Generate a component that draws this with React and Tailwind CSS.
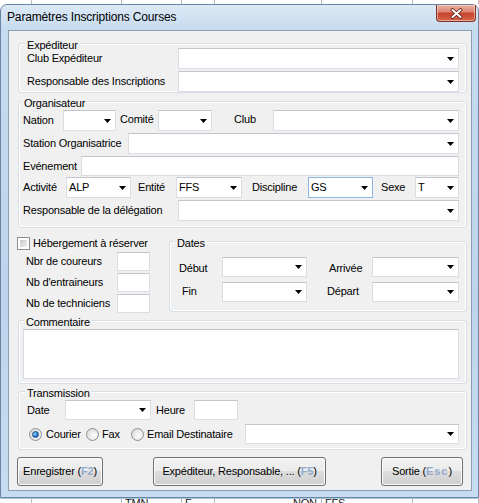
import React from 'react';

function Arrow() {
  return (
    <svg width="7" height="4" viewBox="0 0 7 4" className="shrink-0">
      <path d="M0 0H7L3.5 4Z" fill="#000" />
    </svg>
  );
}

function Combo({ className = '', value = '', focus = false }) {
  return (
    <div
      className={`h-full ${className} flex items-center justify-between bg-white border ${
        focus ? 'border-[#8cb7e4]' : 'border-[#dadde3] border-t-[#c2c5cb]'
      } pl-[2px] pr-[4px]`}
    >
      <span>{value}</span>
      <Arrow />
    </div>
  );
}

function TextBox({ className = '' }) {
  return <div className={`h-full ${className} bg-white border border-[#dadde3] border-t-[#c2c5cb]`} />;
}

function Group({ title, labelPl, className = '', bodyClass = '', children }) {
  return (
    <div className={`border border-[#d5dfe5] rounded-[3px] shadow-[inset_0_0_0_1px_#ffffff] ${className}`}>
      <div className={`h-0 ${labelPl}`}>
        <span className="inline-block -translate-y-[7px] bg-[#f0f0f0] px-[2px] leading-[13px]">{title}</span>
      </div>
      <div className={bodyClass}>{children}</div>
    </div>
  );
}

function Radio({ checked }) {
  return (
    <div className="w-[13px] h-[13px] shrink-0 rounded-full border border-[#8e8f8f] bg-[radial-gradient(circle_at_60%_60%,#fdfdfd,#d2d2d2)] flex items-center justify-center">
      {checked && (
        <div className="w-[7px] h-[7px] rounded-full border border-[#1a4e86] bg-[radial-gradient(circle_at_35%_35%,#9ad6ff,#2a7fd0_55%,#0c4d92)]" />
      )}
    </div>
  );
}

function Button({ className = '', children }) {
  return (
    <div
      className={`h-full ${className} rounded-[3px] border border-[#707070] shadow-[inset_0_0_0_1px_#fbfbfb] bg-[linear-gradient(180deg,#f3f3f3_0%,#ebebeb_48%,#dddddd_50%,#cfcfcf_100%)] flex items-center justify-center`}
    >
      {children}
    </div>
  );
}

function Key({ children, wide = false }) {
  return <span className={`text-[#92aacb] font-bold ${wide ? 'tracking-[1px]' : ''}`}>{children}</span>;
}

function Strip({ cells, className }) {
  return (
    <div className={`flex bg-white overflow-hidden ${className}`}>
      {cells.map((c, i) => (
        <div key={i} className={`shrink-0 border-r border-[#b9b9b9] text-[#222] leading-[13px] ${c.cls}`}>
          {c.text}
        </div>
      ))}
    </div>
  );
}

function CloseButton() {
  return (
    <div className="ml-auto mr-[2px] w-[40px] h-[17px] rounded-b-[4px] border border-t-0 border-[#7f3427] bg-[linear-gradient(180deg,#eab3a6_0%,#dd8573_42%,#c7452e_52%,#d0654b_100%)] shadow-[inset_0_0_0_1px_rgba(255,220,210,0.55)] flex items-center justify-center">
      <svg width="13" height="11" viewBox="0 0 13 11">
        <path d="M2.5 2L10.5 9M10.5 2L2.5 9" stroke="#5a1e14" strokeWidth="3.6" strokeLinecap="round" />
        <path d="M2.5 2L10.5 9M10.5 2L2.5 9" stroke="#ffffff" strokeWidth="2" strokeLinecap="round" />
      </svg>
    </div>
  );
}

export default function App() {
  const topCells = [
    { cls: 'w-[32px]' },
    { cls: 'w-[90px] pl-[3px] -mt-[10px]', text: 'FFS-ESP' },
    { cls: 'w-[60px]' },
    { cls: 'w-[33px]' },
    { cls: 'w-[107px]' },
    { cls: 'w-[91px]' },
    { cls: 'w-[66px] pl-[5px] -mt-[10px]', text: 'REG' },
  ];
  const bottomCells = [
    { cls: 'w-[32px]' },
    { cls: 'w-[90px]' },
    { cls: 'w-[60px] pl-[3px] -mt-[2px]', text: 'TMN' },
    { cls: 'w-[33px] pl-[3px] -mt-[2px]', text: 'F' },
    { cls: 'w-[107px] pl-[78px] -mt-[2px]', text: 'NON' },
    { cls: 'w-[91px] pl-[3px] -mt-[2px]', text: 'FFS' },
    { cls: 'w-[66px]' },
  ];

  return (
    <div className="w-[479px] h-[503px] overflow-hidden bg-white text-black text-[11px] tracking-[-0.2px] font-['Liberation_Sans',Arial,sans-serif]">
      <Strip cells={topCells} className="h-[4px]" />

      <div className="h-[494px] rounded-t-[7px] border border-[#6a84a4] bg-[linear-gradient(180deg,#dce9f6_0%,#c6dbef_5%,#bdd4ec_60%,#c7dcf0_100%)] flex flex-col">
        <div className="h-[25px] flex items-start">
          <div className="pl-[6px] pt-[5px] text-[12px] tracking-[-0.15px] leading-[15px]">Paramètres Inscriptions Courses</div>
          <CloseButton />
        </div>

        <div className="ml-[7px] w-[464px] h-[461px] border border-[#8a9db5] bg-[#f0f0f0] flex flex-col">
          <Group
            title="Expéditeur"
            labelPl="pl-[6px]"
            className="mt-[12px] ml-[9px] w-[449px]"
            bodyClass="pt-[4px] pl-[8px] pr-[7px] flex flex-col gap-[2px]"
          >
            <div className="h-[21px] flex items-center">
              <span className="w-[151px] shrink-0">Club Expéditeur</span>
              <Combo className="flex-1" />
            </div>
            <div className="h-[21px] flex items-center">
              <span className="w-[151px] shrink-0">Responsable des Inscriptions</span>
              <Combo className="flex-1" />
            </div>
          </Group>

          <Group
            title="Organisateur"
            labelPl="pl-[3px]"
            className="mt-[8px] ml-[9px] w-[449px]"
            bodyClass="pt-[8px] pl-[4px] pr-[7px] pb-[6px] flex flex-col"
          >
            <div className="h-[21px] flex items-center">
              <span className="w-[40px] shrink-0">Nation</span>
              <Combo className="w-[53px] shrink-0" />
              <span className="w-[42px] pl-[4px] shrink-0 -mt-[2px]">Comité</span>
              <Combo className="w-[54px] shrink-0" />
              <span className="w-[61px] pl-[22px] shrink-0 -mt-[2px]">Club</span>
              <Combo className="flex-1" />
            </div>
            <div className="h-[21px] mt-[2px] flex items-center">
              <span className="w-[105px] shrink-0">Station Organisatrice</span>
              <Combo className="flex-1" />
            </div>
            <div className="h-[20px] mt-[2px] flex items-center">
              <span className="w-[58px] shrink-0">Evénement</span>
              <TextBox className="flex-1" />
            </div>
            <div className="h-[21px] mt-[1px] flex items-center">
              <span className="w-[43px] shrink-0">Activité</span>
              <Combo className="w-[65px] shrink-0" value="ALP" />
              <span className="w-[45px] pl-[7px] shrink-0">Entité</span>
              <Combo className="w-[66px] shrink-0" value="FFS" />
              <span className="w-[66px] pl-[10px] shrink-0">Discipline</span>
              <Combo className="w-[65px] shrink-0" value="GS" focus />
              <span className="w-[42px] pl-[8px] shrink-0">Sexe</span>
              <Combo className="flex-1" value="T" />
            </div>
            <div className="h-[21px] mt-[2px] flex items-center">
              <span className="w-[155px] shrink-0">Responsable de la délégation</span>
              <Combo className="flex-1" />
            </div>
          </Group>

          <div className="flex items-start">
            <div className="w-[160px] shrink-0 pt-[9px] flex flex-col">
              <div className="h-[13px] ml-[8px] flex items-center">
                <div className="w-[13px] h-[13px] shrink-0 border border-[#8e8f8f] bg-white p-[2px]">
                  <div className="w-full h-full bg-[linear-gradient(135deg,#c9c9c9,#f2f2f2)]" />
                </div>
                <span className="ml-[3px]">Hébergement à réserver</span>
              </div>
              {['Nbr de coureurs', "Nb d'entraineurs", 'Nb de techniciens'].map((t) => (
                <div key={t} className="h-[19px] mt-[2px] pl-[17px] flex items-center">
                  <span className="w-[91px] shrink-0">{t}</span>
                  <TextBox className="w-[33px]" />
                </div>
              ))}
            </div>

            <Group
              title="Dates"
              labelPl="pl-[5px]"
              className="mt-[13px] w-[298px] shrink-0"
              bodyClass="pt-[15px] pb-[9px] flex flex-col"
            >
              <div className="h-[20px] flex items-center">
                <span className="w-[52px] pl-[9px] shrink-0 pt-[2px]">Début</span>
                <Combo className="w-[85px] shrink-0" />
                <span className="w-[65px] pl-[22px] shrink-0 pt-[2px]">Arrivée</span>
                <Combo className="w-[87px] shrink-0" />
              </div>
              <div className="h-[20px] mt-[5px] flex items-center">
                <span className="w-[52px] pl-[12px] shrink-0 -mt-[2px]">Fin</span>
                <Combo className="w-[85px] shrink-0" />
                <span className="w-[65px] pl-[20px] shrink-0 -mt-[2px]">Départ</span>
                <Combo className="w-[87px] shrink-0" />
              </div>
            </Group>
          </div>

          <Group
            title="Commentaire"
            labelPl="pl-[5px]"
            className="mt-[7px] ml-[9px] w-[449px]"
            bodyClass="pt-[8px] pl-[4px] pr-[7px] pb-[4px]"
          >
            <div className="h-[50px] bg-white border border-[#dadde3] border-t-[#c2c5cb]" />
          </Group>

          <Group
            title="Transmission"
            labelPl="pl-[6px]"
            className="mt-[7px] ml-[9px] w-[449px]"
            bodyClass="pt-[8px] pl-[8px] pr-[7px] pb-[5px] flex flex-col"
          >
            <div className="h-[20px] flex items-center">
              <span className="w-[38px] shrink-0">Date</span>
              <Combo className="w-[86px] shrink-0" />
              <span className="w-[43px] pl-[5px] shrink-0">Heure</span>
              <TextBox className="w-[44px]" />
            </div>
            <div className="h-[20px] mt-[4px] flex items-center">
              <div className="w-[59px] pl-[2px] shrink-0 flex items-center">
                <Radio checked />
                <span className="ml-[4px]">Courier</span>
              </div>
              <div className="w-[45px] shrink-0 flex items-center">
                <Radio />
                <span className="ml-[3px]">Fax</span>
              </div>
              <div className="w-[114px] shrink-0 flex items-center">
                <Radio />
                <span className="ml-[3px]">Email Destinataire</span>
              </div>
              <Combo className="flex-1" />
            </div>
          </Group>

          <div className="h-[29px] mt-[7px] pl-[8px] flex">
            <Button className="w-[86px] shrink-0">
              <span>
                Enregistrer (<Key>F2</Key>)
              </span>
            </Button>
            <Button className="w-[173px] ml-[50px] shrink-0">
              <span>
                Expéditeur, Responsable, ... (<Key>F5</Key>)
              </span>
            </Button>
            <Button className="w-[82px] ml-[55px] shrink-0">
              <span>
                Sortie (<Key wide>Esc</Key>)
              </span>
            </Button>
          </div>
        </div>
      </div>

      <Strip cells={bottomCells} className="h-[5px] border-t border-[#a9c4e2]" />
    </div>
  );
}
